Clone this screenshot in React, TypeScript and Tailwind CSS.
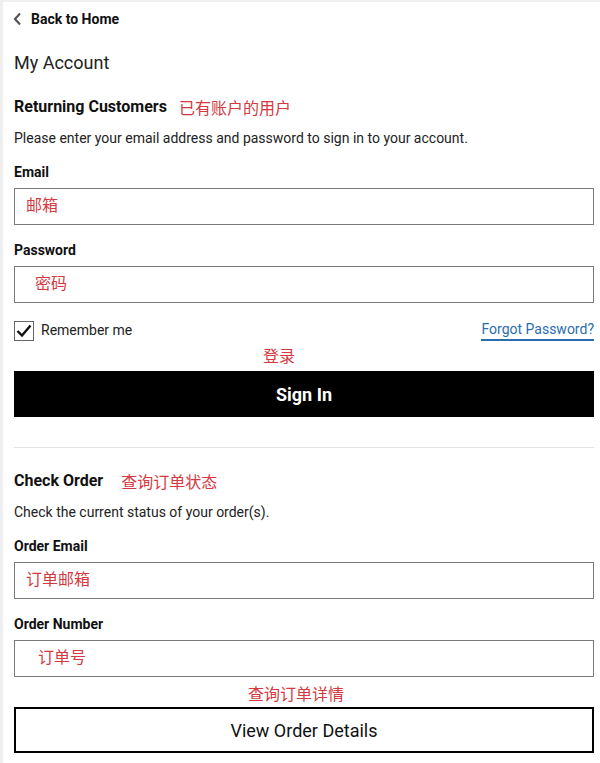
const RED = 'text-[#d5393f]'

function Field({ label, placeholder, indent }: { label: string; placeholder: string; indent: string }) {
  return (
    <>
      <div className="mt-[14px] h-[20px] text-[14px] font-bold leading-[20px] text-[#111]">{label}</div>
      <div className={`mt-[6px] flex h-[37px] items-center border border-[#7a7a7a] pb-[6px] ${indent}`}>
        <span className={`text-[16px] leading-[20px] ${RED} font-['Noto_Sans_CJK_SC',sans-serif]`}>{placeholder}</span>
      </div>
    </>
  )
}

export default function App() {
  return (
    <div className="h-[763px] w-[600px] overflow-hidden border-l-[3px] border-t-2 border-[#efefef] bg-white pl-[11px] pr-[6px] font-['Roboto','Noto_Sans_CJK_SC',sans-serif] text-[#222]">
      <div className="flex h-[34px] items-center gap-[9px]">
        <svg width="9" height="14" viewBox="0 0 9 14" className="-ml-px">
          <path d="M7 1.5 L2 7 L7 12.5" fill="none" stroke="#555" strokeWidth="2.2" />
        </svg>
        <span className="text-[14px] font-bold text-[#111]">Back to Home</span>
      </div>

      <div className="mt-[15px] h-[24px] text-[18px] leading-[24px] text-[#222]">My Account</div>

      <div className="mt-[20px] flex h-[24px] items-center">
        <span className="text-[16px] font-bold text-[#111]">Returning Customers</span>
        <span className={`ml-[12px] text-[16px] ${RED} font-['Noto_Sans_CJK_SC',sans-serif]`}>已有账户的用户</span>
      </div>
      <div className="mt-[9px] h-[20px] text-[14px] leading-[20px] text-[#222]">
        Please enter your email address and password to sign in to your account.
      </div>

      <Field label="Email" placeholder="邮箱" indent="pl-[11px]" />
      <div className="h-px" />
      <Field label="Password" placeholder="密码" indent="pl-[20px]" />

      <div className="mt-[17px] flex h-[21px] items-center justify-between">
        <div className="flex items-center gap-[7px]">
          <div className="flex h-[20px] w-[20px] items-center justify-center border border-[#666]">
            <svg width="16" height="14" viewBox="0 0 16 14">
              <path d="M1.5 7 L6 11.5 L14.5 1.5" fill="none" stroke="#111" strokeWidth="2.4" />
            </svg>
          </div>
          <span className="text-[14px] text-[#222]">Remember me</span>
        </div>
        <span className="border-b-2 border-[#2a6db0] pb-px text-[14px] leading-[17px] text-[#2a6db0]">Forgot Password?</span>
      </div>

      <div className={`mt-[4px] h-[20px] pr-[50px] text-center text-[16px] leading-[20px] ${RED} font-['Noto_Sans_CJK_SC',sans-serif]`}>登录</div>
      <button className="mt-[6px] flex h-[46px] w-full items-center justify-center bg-black text-[18px] font-bold text-white">
        Sign In
      </button>

      <div className="mt-[30px] h-px bg-[#e2e2e2]" />

      <div className="mt-[21px] flex h-[24px] items-center">
        <span className="text-[16px] font-bold text-[#111]">Check Order</span>
        <span className={`ml-[18px] text-[16px] ${RED} font-['Noto_Sans_CJK_SC',sans-serif]`}>查询订单状态</span>
      </div>
      <div className="mt-[9px] h-[20px] text-[14px] leading-[20px] text-[#222]">Check the current status of your order(s).</div>

      <Field label="Order Email" placeholder="订单邮箱" indent="pl-[11px]" />
      <div className="h-px" />
      <Field label="Order Number" placeholder="订单号" indent="pl-[23px]" />

      <div className={`mt-[6px] h-[20px] pr-[16px] text-center text-[16px] leading-[20px] ${RED} font-['Noto_Sans_CJK_SC',sans-serif]`}>查询订单详情</div>
      <button className="mt-[4px] flex h-[46px] w-full items-center justify-center border-2 border-black bg-white text-[18px] text-[#111]">
        View Order Details
      </button>
    </div>
  )
}
